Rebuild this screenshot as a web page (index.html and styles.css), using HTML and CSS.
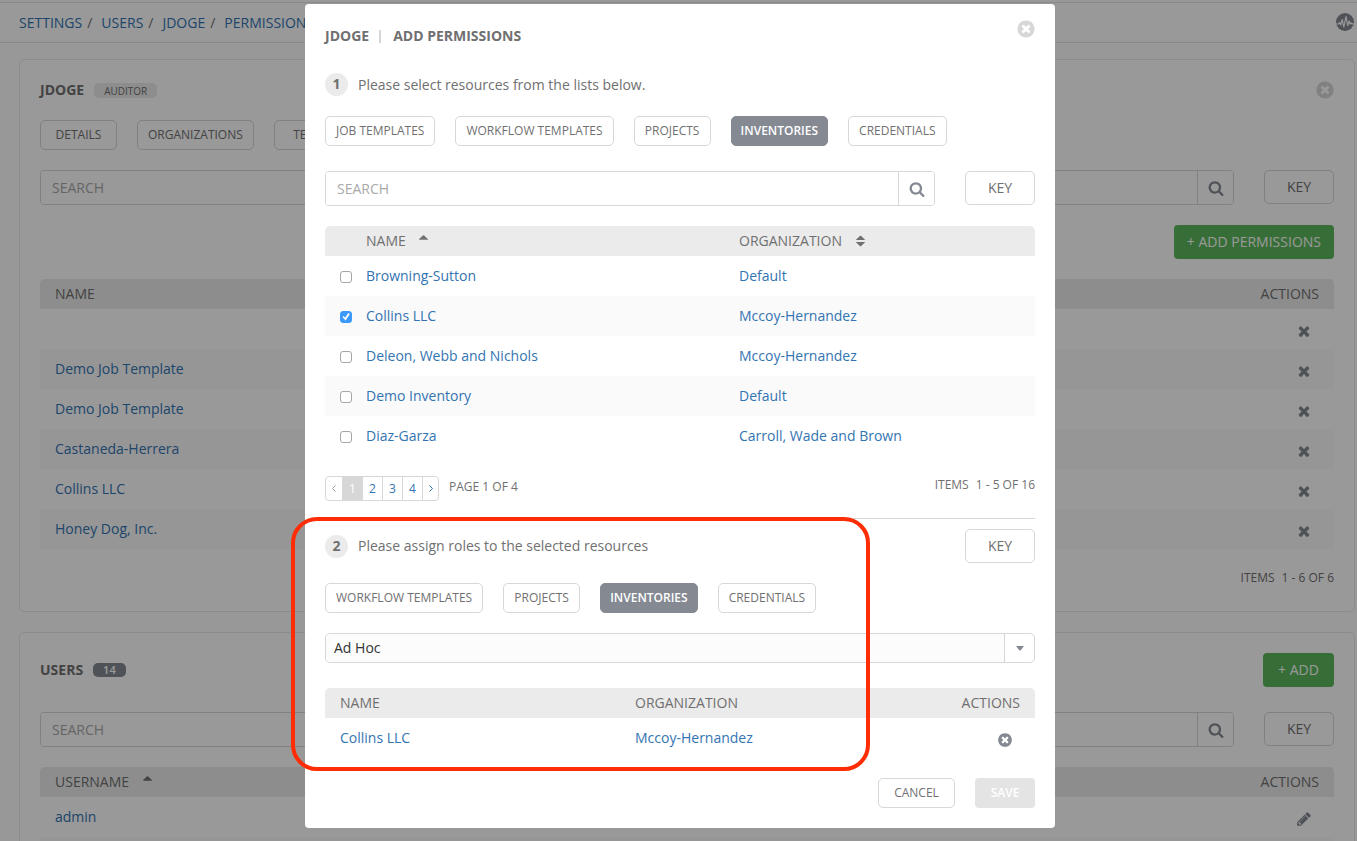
FILE: index.html
```html
<!DOCTYPE html>
<html lang="en">
<head>
<meta charset="utf-8">
<title>Add Permissions</title>
<link rel="stylesheet" href="styles.css">
</head>
<body>
<svg class="sprite" aria-hidden="true">
  <symbol id="times" viewBox="0 0 1792 1792"><path d="M1490 1322q0 40-28 68l-136 136q-28 28-68 28t-68-28l-294-294-294 294q-28 28-68 28t-68-28l-136-136q-28-28-28-68t28-68l294-294-294-294q-28-28-28-68t28-68l136-136q28-28 68-28t68 28l294 294 294-294q28-28 68-28t68 28l136 136q28 28 28 68t-28 68l-294 294 294 294q28 28 28 68z"/></symbol>
  <symbol id="search" viewBox="0 0 1792 1792"><path d="M1216 832q0-185-131.500-316.500t-316.500-131.500-316.500 131.500-131.500 316.500 131.500 316.500 316.500 131.500 316.500-131.500 131.500-316.500zm512 832q0 52-38 90t-90 38q-54 0-90-38l-343-342q-179 124-399 124-143 0-273.500-55.500t-225-150-150-225-55.500-273.500 55.500-273.500 150-225 225-150 273.500-55.500 273.500 55.500 225 150 150 225 55.500 273.500q0 220-124 399l343 343q37 37 37 90z"/></symbol>
  <symbol id="pencil" viewBox="0 0 1792 1792"><path d="M491 1536l91-91-235-235-91 91v107h128v128h107zm523-928q0-22-22-22-10 0-17 7l-542 542q-7 7-7 17 0 22 22 22 10 0 17-7l542-542q7-7 7-17zm-54-192l416 416-832 832h-416v-416zm683 96q0 53-37 90l-166 166-416-416 166-165q36-38 90-38 53 0 91 38l235 234q37 39 37 91z"/></symbol>
  <symbol id="times-circle" viewBox="0 0 1792 1792"><path d="M1277 1122q0-26-19-45l-181-181 181-181q19-19 19-45 0-27-19-46l-90-90q-19-19-46-19-26 0-45 19l-181 181-181-181q-19-19-45-19-27 0-46 19l-90 90q-19 19-19 46 0 26 19 45l181 181-181 181q-19 19-19 45 0 27 19 46l90 90q19 19 46 19 26 0 45-19l181-181 181 181q19 19 45 19 27 0 46-19l90-90q19-19 19-46zm387-226q0 209-103 385.500t-279.500 279.500-385.500 103-385.500-103-279.500-279.500-103-385.500 103-385.500 279.500-279.500 385.500-103 385.500 103 279.500 279.500 103 385.500z"/></symbol>
  <symbol id="activity" viewBox="0 0 18 18"><circle cx="9" cy="9" r="9"/><path d="M0 11h2.500l1.200-1.600 1 2.600 1.600-5.500 1.500 7.500L10 3.500l1.700 9 1.500-4.500 1 3 1-1 .8.800h2" fill="none" stroke="#fff" stroke-width="1.200" stroke-linejoin="round"/></symbol>
  <symbol id="sort-up" viewBox="0 0 10 5"><path d="M0 5q0-.6.500-1L4.300.4q.7-.6 1.400 0L9.500 4q.5.400.5 1z"/></symbol>
  <symbol id="sort" viewBox="0 0 10 12"><path d="M0 5q0-.6.500-1L4.300.4q.7-.6 1.400 0L9.500 4q.5.400.5 1zM0 7q0 .6.500 1l3.800 3.600q.7.600 1.400 0L9.500 8q.5-.4.500-1z"/></symbol>
  <symbol id="caret" viewBox="0 0 8 5"><path d="M0 0h8L4.500 4.500h-1z"/></symbol>
</svg>

<div class="page">
  <header class="topbar">
    <nav class="crumbs" aria-label="Breadcrumb">
      <a href="#">SETTINGS</a><span class="slash">/</span>
      <a href="#">USERS</a><span class="slash">/</span>
      <a href="#">JDOGE</a><span class="slash">/</span>
      <a href="#">PERMISSIONS</a>
    </nav>
    <button class="icon-btn" aria-label="Activity stream"><svg class="i18"><use href="#activity"/></svg></button>
  </header>

  <main class="cards">
    <section class="card">
      <div class="card-head">
        <h1 class="title">JDOGE</h1><span class="badge">AUDITOR</span>
        <button class="icon-btn pale push" aria-label="Close"><svg class="i20"><use href="#times-circle"/></svg></button>
      </div>
      <div class="tabs">
        <button class="tab">DETAILS</button>
        <button class="tab">ORGANIZATIONS</button>
        <button class="tab">TEAMS</button>
      </div>
      <div class="search-row">
        <div class="search">
          <input type="text" placeholder="SEARCH" aria-label="Search permissions">
          <button aria-label="Search"><svg class="i15"><use href="#search"/></svg></button>
        </div>
        <button class="key">KEY</button>
      </div>
      <div class="action-row"><button class="add">+ ADD PERMISSIONS</button></div>
      <table class="grid">
        <thead><tr><th>NAME</th><th class="end">ACTIONS</th></tr></thead>
        <tbody>
          <tr><td></td><td class="end"><button class="icon-btn row-icon" aria-label="Remove"><svg class="i16"><use href="#times"/></svg></button></td></tr>
          <tr><td><a href="#">Demo Job Template</a></td><td class="end"><button class="icon-btn row-icon" aria-label="Remove"><svg class="i16"><use href="#times"/></svg></button></td></tr>
          <tr><td><a href="#">Demo Job Template</a></td><td class="end"><button class="icon-btn row-icon" aria-label="Remove"><svg class="i16"><use href="#times"/></svg></button></td></tr>
          <tr><td><a href="#">Castaneda-Herrera</a></td><td class="end"><button class="icon-btn row-icon" aria-label="Remove"><svg class="i16"><use href="#times"/></svg></button></td></tr>
          <tr><td><a href="#">Collins LLC</a></td><td class="end"><button class="icon-btn row-icon" aria-label="Remove"><svg class="i16"><use href="#times"/></svg></button></td></tr>
          <tr><td><a href="#">Honey Dog, Inc.</a></td><td class="end"><button class="icon-btn row-icon" aria-label="Remove"><svg class="i16"><use href="#times"/></svg></button></td></tr>
        </tbody>
      </table>
      <div class="card-foot"><span class="items"><span>ITEMS</span><span>1 - 6 OF 6</span></span></div>
    </section>

    <section class="card">
      <div class="card-head">
        <h2 class="title">USERS</h2><span class="badge dark">14</span>
        <button class="add push">+ ADD</button>
      </div>
      <div class="search-row spaced">
        <div class="search">
          <input type="text" placeholder="SEARCH" aria-label="Search users">
          <button aria-label="Search"><svg class="i15"><use href="#search"/></svg></button>
        </div>
        <button class="key">KEY</button>
      </div>
      <table class="grid">
        <thead><tr><th>USERNAME <svg class="sort-up"><use href="#sort-up"/></svg></th><th class="end">ACTIONS</th></tr></thead>
        <tbody>
          <tr><td><a href="#">admin</a></td><td class="end"><button class="icon-btn row-icon" aria-label="Edit"><svg class="i16"><use href="#pencil"/></svg></button></td></tr>
          <tr><td></td><td></td></tr>
        </tbody>
      </table>
    </section>
  </main>
</div>

<div class="overlay">
  <div class="modal" role="dialog" aria-modal="true" aria-labelledby="modal-title">
    <div class="modal-head">
      <h2 class="title modal-title" id="modal-title"><span>JDOGE</span><i class="bar"></i><span>ADD PERMISSIONS</span></h2>
      <button class="icon-btn pale" aria-label="Close"><svg class="i20"><use href="#times-circle"/></svg></button>
    </div>

    <section class="step-one">
      <div class="step"><span class="num">1</span><span>Please select resources from the lists below.</span></div>
      <div class="tabs">
        <button class="tab">JOB TEMPLATES</button>
        <button class="tab">WORKFLOW TEMPLATES</button>
        <button class="tab">PROJECTS</button>
        <button class="tab active">INVENTORIES</button>
        <button class="tab">CREDENTIALS</button>
      </div>
      <div class="search-row spaced">
        <div class="search">
          <input type="text" placeholder="SEARCH" aria-label="Search inventories">
          <button aria-label="Search"><svg class="i15"><use href="#search"/></svg></button>
        </div>
        <button class="key">KEY</button>
      </div>
      <table class="grid picker">
        <thead><tr><th class="check"></th><th class="name">NAME <svg class="sort-up"><use href="#sort-up"/></svg></th><th>ORGANIZATION <svg class="sort"><use href="#sort"/></svg></th></tr></thead>
        <tbody>
          <tr><td class="check"><input type="checkbox" aria-label="Browning-Sutton"></td><td><a href="#">Browning-Sutton</a></td><td><a href="#">Default</a></td></tr>
          <tr><td class="check"><input type="checkbox" aria-label="Collins LLC" checked></td><td><a href="#">Collins LLC</a></td><td><a href="#">Mccoy-Hernandez</a></td></tr>
          <tr><td class="check"><input type="checkbox" aria-label="Deleon, Webb and Nichols"></td><td><a href="#">Deleon, Webb and Nichols</a></td><td><a href="#">Mccoy-Hernandez</a></td></tr>
          <tr><td class="check"><input type="checkbox" aria-label="Demo Inventory"></td><td><a href="#">Demo Inventory</a></td><td><a href="#">Default</a></td></tr>
          <tr><td class="check"><input type="checkbox" aria-label="Diaz-Garza"></td><td><a href="#">Diaz-Garza</a></td><td><a href="#">Carroll, Wade and Brown</a></td></tr>
        </tbody>
      </table>
      <div class="paging">
        <nav class="pager" aria-label="Pages">
          <span class="arrow"><svg viewBox="0 0 4 7"><path d="M3.500.5l-3 3 3 3"/></svg></span><span class="current">1</span><a href="#">2</a><a href="#">3</a><a href="#">4</a><a class="arrow" href="#" aria-label="Next"><svg viewBox="0 0 4 7"><path d="M.5.500l3 3-3 3"/></svg></a>
        </nav>
        <span class="page-of">PAGE 1 OF 4</span>
        <span class="items push"><span>ITEMS</span><span>1 - 5 OF 16</span></span>
      </div>
    </section>

    <section class="step-two">
      <div class="step"><span class="num">2</span><span>Please assign roles to the selected resources</span><button class="key push">KEY</button></div>
      <div class="tabs">
        <button class="tab">WORKFLOW TEMPLATES</button>
        <button class="tab">PROJECTS</button>
        <button class="tab active">INVENTORIES</button>
        <button class="tab">CREDENTIALS</button>
      </div>
      <div class="select">
        <select aria-label="Role"><option>Ad Hoc</option><option>Admin</option><option>Use</option></select>
        <span class="select-arrow"><svg class="caret"><use href="#caret"/></svg></span>
      </div>
      <table class="grid chosen">
        <thead><tr><th>NAME</th><th>ORGANIZATION</th><th class="end">ACTIONS</th></tr></thead>
        <tbody><tr><td><a href="#">Collins LLC</a></td><td><a href="#">Mccoy-Hernandez</a></td><td class="end"><button class="icon-btn row-icon" aria-label="Remove"><svg class="i16"><use href="#times-circle"/></svg></button></td></tr></tbody>
      </table>
      <div class="highlight"></div>
    </section>

    <div class="modal-foot">
      <button class="tab">CANCEL</button>
      <button class="save" disabled>SAVE</button>
    </div>
  </div>
</div>
</body>
</html>
```
FILE: styles.css
```css
* { box-sizing: border-box; }

body {
  margin: 0;
  overflow: hidden;
  background: #fdfdfd;
  color: #707070;
  font-family: "Open Sans", "Noto Sans", sans-serif;
  font-size: 14px;
  line-height: 20px;
}

a { color: #3374b2; text-decoration: none; }
button, input, select { font: inherit; color: inherit; }
button { cursor: pointer; }
svg { display: block; fill: currentColor; }

.sprite { position: absolute; width: 0; height: 0; }
.i15 { width: 16px; height: 16px; }
.i16 { width: 16px; height: 16px; }
.i18 { width: 18px; height: 18px; }
.i20 { width: 20px; height: 20px; }

.page { height: 100vh; overflow: hidden; padding-top: 2px; }

.topbar {
  display: flex;
  align-items: center;
  justify-content: space-between;
  height: 41px;
  padding: 0 3px 0 19px;
  border-top: 1px solid #e4e4e4;
  border-bottom: 1px solid #e4e4e4;
  background: #fff;
}
.topbar .icon-btn { padding-bottom: 1px; }
.crumbs { display: flex; }
.slash { margin: 0 9px 0 5px; }

.icon-btn {
  display: inline-flex;
  padding: 0;
  border: 0;
  background: none;
  color: #848992;
}
.icon-btn.pale { margin-right: -1px; color: #d7d7d7; }
.push { margin-left: auto; }

.cards { display: grid; gap: 20px; padding: 16px 2px 0 19px; }
.card { padding: 20px; border: 1px solid #e8e8e8; border-radius: 5px; background: #fff; }
.card-head { display: flex; align-items: center; }

.title { margin: 0; font-size: 14px; font-weight: 700; line-height: 20px; }
.badge {
  margin-left: 10px;
  padding: 1px 10px 0;
  border-radius: 5px;
  background: #ebebeb;
  font-size: 10px;
  line-height: 14px;
}
.badge.dark { padding: 0 10px; background: #848992; color: #fff; font-size: 11px; font-weight: 600; }

.tabs { display: flex; gap: 20px; margin-top: 20px; }
.tab {
  min-width: 77px;
  height: 30px;
  padding: 0 10px;
  border: 1px solid #d7d7d7;
  border-radius: 5px;
  background: #fff;
  font-size: 12px;
  line-height: 16px;
  white-space: nowrap;
}
.tab.active { padding: 0 9px; border-color: #848992; background: #848992; color: #fff; font-weight: 600; }

.search-row { display: flex; gap: 30px; align-items: flex-start; margin-top: 20px; }
.search-row.spaced { margin-top: 25px; }
.search {
  display: flex;
  flex: 1;
  height: 35px;
  border: 1px solid #d7d7d7;
  border-radius: 4px;
  overflow: hidden;
}
.search input { flex: 1; min-width: 0; padding: 0 11px; border: 0; background: #fff; }
.search input::placeholder { color: #a9a9a9; opacity: 1; }
.search button {
  display: grid;
  place-items: center;
  width: 36px;
  padding: 0;
  border: 0;
  border-left: 1px solid #d7d7d7;
  background: #fff;
  color: #848992;
}
.key {
  width: 70px;
  height: 34px;
  padding: 0;
  border: 1px solid #d7d7d7;
  border-radius: 5px;
  background: #fff;
}

.action-row { display: flex; justify-content: flex-end; margin-top: 20px; }
.add {
  min-width: 71px;
  height: 34px;
  padding: 0 13px;
  border: 0;
  border-radius: 4px;
  background: #5cb85c;
  color: #fff;
}

.grid { width: 100%; margin-top: 20px; border-collapse: collapse; table-layout: fixed; }
.grid th, .grid td { padding: 0 15px; text-align: left; }
.grid th { height: 30px; background: #ebebeb; font-weight: 400; }
.grid th:first-child { border-top-left-radius: 5px; }
.grid th:last-child { border-top-right-radius: 5px; }
.grid td { height: 40px; }
.grid tbody tr:nth-child(even) { background: #fafafa; }
.grid .end { text-align: right; }
.grid th svg { display: inline-block; margin-left: 10px; }
.sort-up { width: 9px; height: 5px; vertical-align: 6px; }
.sort { width: 9px; height: 12px; vertical-align: -1px; }
.row-icon { margin-right: 7px; vertical-align: middle; padding-top: 3px; }

.items { display: flex; gap: 7px; font-size: 12px; line-height: 18px; }
.card-foot { display: flex; justify-content: flex-end; padding: 20px 0 4px; }

.overlay {
  position: fixed;
  inset: 0;
  overflow: auto;
  padding: 4px 0 13px 3px;
  background: rgba(0, 0, 0, .4);
}
.modal {
  max-width: 750px;
  margin: 0 auto;
  padding: 15px 20px 20px;
  border-radius: 4px;
  background: #fff;
}
.modal-head { display: flex; align-items: flex-start; justify-content: space-between; }
.modal-title { display: flex; align-items: center; padding: 7px 0 2px; }
.bar { width: 2px; height: 13px; margin: 0 12px 0 10px; background: #d7d7d7; }

.step { display: flex; align-items: center; }
.step-one .step { margin-top: 25px; }
.num {
  width: 23px;
  height: 23px;
  margin-right: 10px;
  border-radius: 50%;
  background: #ebebeb;
  font-weight: 700;
  line-height: 22px;
  text-align: center;
}

.picker .check { width: 41px; padding-right: 0; }
.picker th.name { width: 373px; }
.picker th:not(.check), .picker td:not(.check) { padding-left: 0; }
.picker input {
  display: block;
  width: 12px;
  height: 12px;
  margin: 2px 0 0;
  border: 1px solid #a6a6a6;
  border-radius: 3px;
  background: #fff;
  appearance: none;
}
.picker input:checked { border-color: #3b99fc; background: #3b99fc; }
.picker input:checked::before {
  content: "";
  display: block;
  width: 10px;
  height: 10px;
  background: #fff;
  clip-path: polygon(15% 50%, 28% 40%, 42% 58%, 72% 10%, 88% 20%, 46% 86%);
}

.paging { display: flex; align-items: flex-start; margin-top: 20px; }
.pager {
  display: flex;
  height: 25px;
  border: 1px solid #d7d7d7;
  border-radius: 4px;
  overflow: hidden;
  font-size: 12px;
  line-height: 24px;
  text-align: center;
}
.pager > * { width: 20px; border-left: 1px solid #d7d7d7; }
.pager > .arrow { display: grid; place-items: center; width: 16px; }
.pager svg { width: 4px; height: 7px; fill: none; stroke: currentColor; }
.pager > :first-child { border-left: 0; color: #a0a0a0; }
.pager .current { border-color: #d7d7d7; background: #d7d7d7; color: #fff; }
.page-of { margin-left: 10px; font-size: 12px; line-height: 22px; }

.step-two { position: relative; margin-top: 17px; padding-top: 10px; border-top: 1px solid #d7d7d7; }
.select {
  display: flex;
  height: 30px;
  margin-top: 20px;
  border: 1px solid #d7d7d7;
  border-radius: 5px;
  overflow: hidden;
}
.select select {
  flex: 1;
  padding: 0 8px;
  border: 0;
  background: #fcfcfc;
  color: #333;
  appearance: none;
}
.select-arrow { display: grid; place-items: center; width: 30px; border-left: 1px solid #d7d7d7; color: #848992; }
.caret { width: 8px; height: 5px; }
.chosen { margin-top: 25px; }
.chosen th:first-child { width: 295px; }

.highlight {
  position: absolute;
  inset: -2px 165px -13px -34px;
  border: 4px solid #ff2d05;
  border-radius: 26px;
  pointer-events: none;
}

.modal-foot { display: flex; justify-content: flex-end; gap: 20px; margin-top: 20px; }
.save {
  width: 60px;
  height: 30px;
  padding: 0;
  border: 0;
  border-radius: 4px;
  background: #e4e4e4;
  color: #fff;
  font-size: 12px;
  font-weight: 600;
}
```
